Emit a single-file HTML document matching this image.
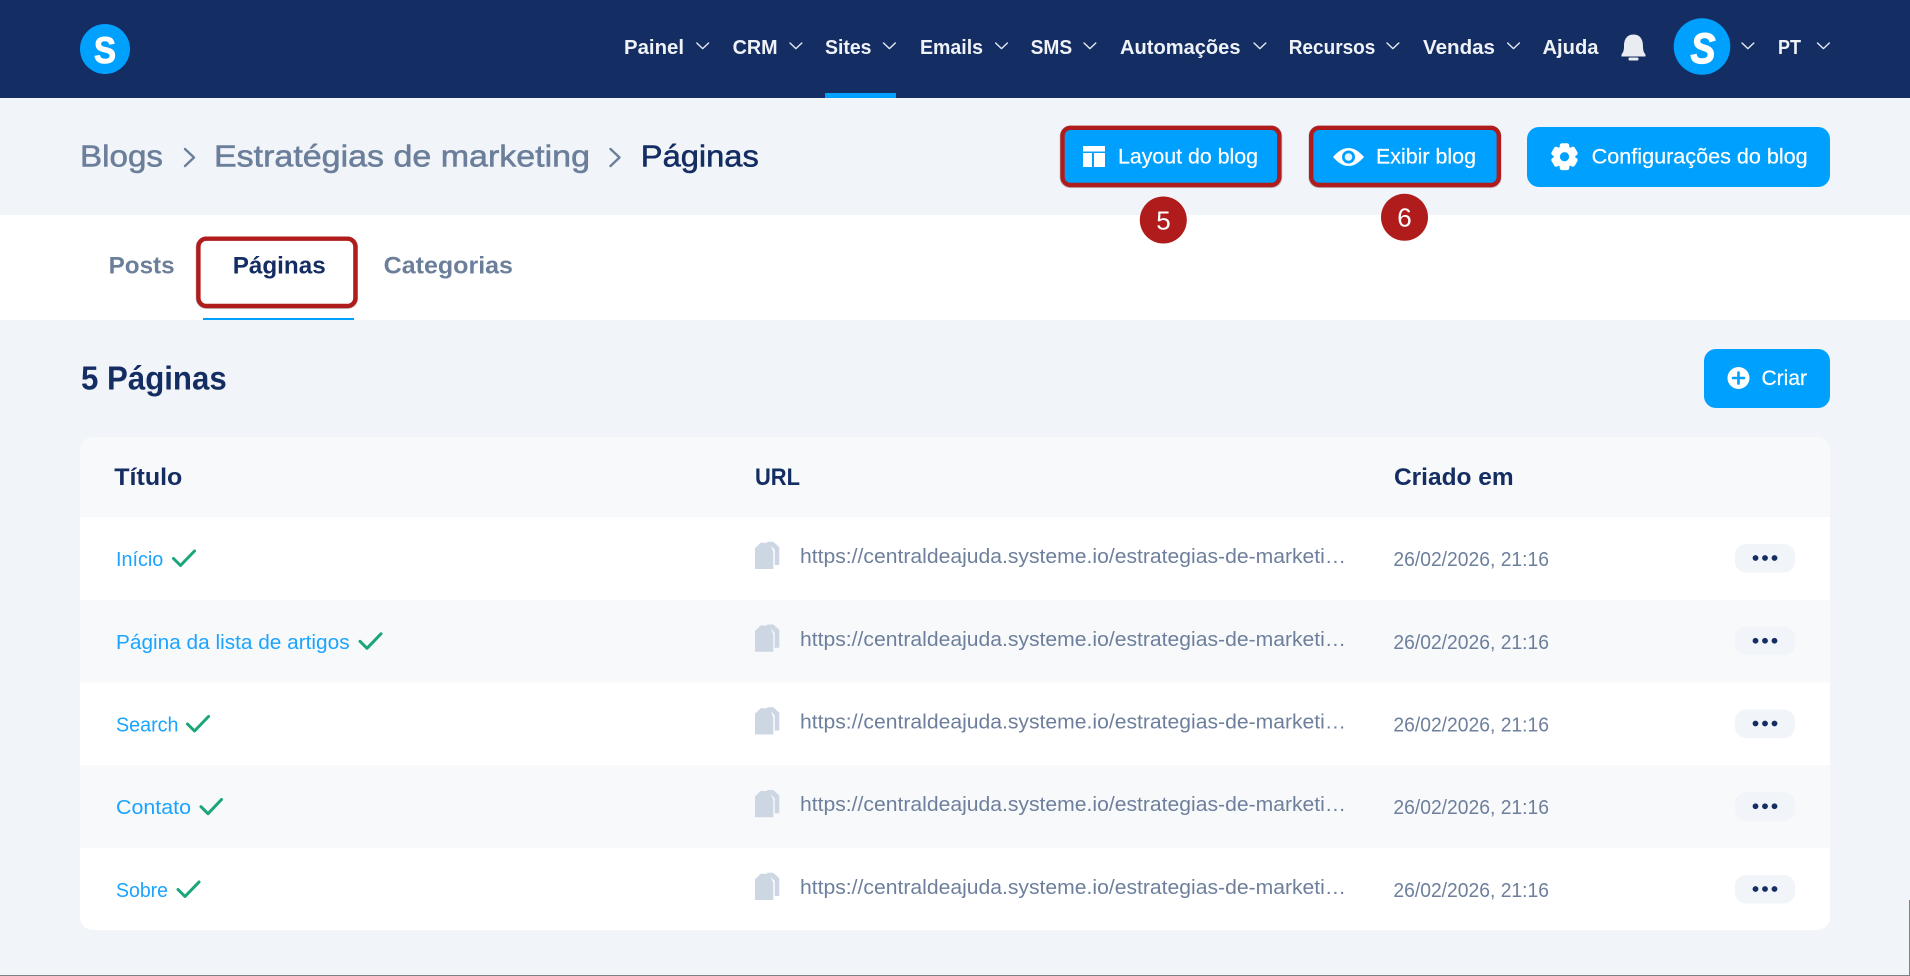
<!DOCTYPE html>
<html lang="pt">
<head>
<meta charset="utf-8">
<title>Páginas</title>
<style>
html,body{margin:0;padding:0;background:#f1f4f8;width:1910px;height:976px;overflow:hidden}
svg{display:block}
text{font-family:"Liberation Sans",sans-serif}
.n{font-size:20px;font-weight:700;fill:#eff2f6}
.b{font-size:31px;fill:#6b7f9b;stroke:#6b7f9b;stroke-width:.55px}
.t{font-size:24.5px;font-weight:700;fill:#6b7f9b}
.btn{font-size:21px;fill:#fff;stroke:#fff;stroke-width:.2px}
.h{font-size:24px;font-weight:700;fill:#142d63}
.l{font-size:20px;fill:#1aa3ff}
.u{font-size:20px;fill:#6d7f9c}
.d{font-size:20px;fill:#6d7f9c}
.chev{fill:none;stroke:#e6eaf0;stroke-width:1.4;stroke-linecap:round;stroke-linejoin:round}
.bc{fill:none;stroke:#6b7f9b;stroke-width:2.4;stroke-linecap:round;stroke-linejoin:round}
.ck{fill:none;stroke:#1aa67a;stroke-width:3;stroke-linecap:round;stroke-linejoin:round}
.rb{fill:none;stroke:#b01c1c;stroke-width:4.4}
.rs{fill:none;stroke:#8a8f98;stroke-width:1;opacity:.55}
</style>
</head>
<body>
<svg width="1910" height="976" viewBox="0 0 1910 976">
<defs>
<g id="doc" fill="#cdd6e3">
<path d="M755 548.3L760.7 542.7H769.3L773.3 551.7V569H755Z"/>
<path d="M765 541.7H773.3L779.3 547.3V565H774.7V550L766.7 541.7Z"/>
</g>
<g id="menu">
<rect x="1735" y="544" width="60" height="28.5" rx="11" fill="#f1f4f8"/>
<circle cx="1755.5" cy="558" r="2.9" fill="#142d63"/>
<circle cx="1765" cy="558" r="2.9" fill="#142d63"/>
<circle cx="1774.5" cy="558" r="2.9" fill="#142d63"/>
</g>
<path id="cv" class="chev" d="M0 0L5.9 5.6L11.8 0"/>
</defs>

<rect width="1910" height="976" fill="#f1f4f8"/>

<!-- top nav -->
<rect width="1910" height="98" fill="#142d63"/>
<ellipse cx="105" cy="49" rx="25" ry="25" fill="#00a0ff"/>
<text x="94" y="63" font-size="37" font-weight="700" fill="#fff" stroke="#fff" stroke-width="1" textLength="22" lengthAdjust="spacingAndGlyphs">S</text>

<text class="n" x="624" y="54" textLength="60" lengthAdjust="spacingAndGlyphs">Painel</text>
<use href="#cv" x="696.8" y="43"/>
<text class="n" x="732.6" y="54" textLength="45" lengthAdjust="spacingAndGlyphs">CRM</text>
<use href="#cv" x="790" y="43"/>
<text class="n" x="825" y="54" textLength="46.5" lengthAdjust="spacingAndGlyphs">Sites</text>
<use href="#cv" x="883.5" y="43"/>
<rect x="825" y="93" width="71" height="5" fill="#00a0ff"/>
<text class="n" x="920" y="54" textLength="63" lengthAdjust="spacingAndGlyphs">Emails</text>
<use href="#cv" x="995.6" y="43"/>
<text class="n" x="1030.6" y="54" textLength="41.5" lengthAdjust="spacingAndGlyphs">SMS</text>
<use href="#cv" x="1084" y="43"/>
<text class="n" x="1120" y="54" textLength="120.5" lengthAdjust="spacingAndGlyphs">Automações</text>
<use href="#cv" x="1254" y="43"/>
<text class="n" x="1288.7" y="54" textLength="86.7" lengthAdjust="spacingAndGlyphs">Recursos</text>
<use href="#cv" x="1387" y="43"/>
<text class="n" x="1423" y="54" textLength="72" lengthAdjust="spacingAndGlyphs">Vendas</text>
<use href="#cv" x="1507.6" y="43"/>
<text class="n" x="1542.5" y="54" textLength="56" lengthAdjust="spacingAndGlyphs">Ajuda</text>
<path d="M1633.5 34.5C1640.5 34.5 1643 40 1643 46C1643 50 1643.5 52 1645.5 54.5V56.5H1621.5V54.5C1623.5 52 1624 50 1624 46C1624 40 1626.5 34.5 1633.5 34.5Z" fill="#e9ecf0"/>
<rect x="1628.5" y="57.5" width="10" height="3" rx="1.4" fill="#e9ecf0"/>
<ellipse cx="1702" cy="46.5" rx="28.3" ry="28.3" fill="#00a0ff"/>
<text x="1690.5" y="63" font-size="43" font-weight="700" font-style="italic" fill="#fff" stroke="#fff" stroke-width="1.2" textLength="25" lengthAdjust="spacingAndGlyphs">S</text>
<use href="#cv" x="1742" y="43"/>
<text class="n" x="1778" y="54" textLength="23" lengthAdjust="spacingAndGlyphs">PT</text>
<use href="#cv" x="1817.5" y="43"/>

<!-- breadcrumb -->
<text class="b" x="80" y="166.7" textLength="83" lengthAdjust="spacingAndGlyphs">Blogs</text>
<path class="bc" d="M185 149L194 157.5L185 166"/>
<text class="b" x="214" y="166.7" textLength="376" lengthAdjust="spacingAndGlyphs">Estratégias de marketing</text>
<path class="bc" d="M610.5 149L619.5 157.5L610.5 166"/>
<text class="b" x="640.8" y="166.7" textLength="118" lengthAdjust="spacingAndGlyphs" style="fill:#142d63;stroke:#142d63">Páginas</text>

<!-- header buttons -->
<rect x="1063" y="128.4" width="216" height="56.4" rx="7" fill="#00a0ff"/>
<rect class="rs" x="1060.2" y="126.2" width="221.6" height="61.4" rx="10"/>
<rect class="rb" x="1062.5" y="127.8" width="216.8" height="57.2" rx="8"/>
<rect x="1083" y="146" width="22" height="5.5" fill="#fff"/>
<rect x="1083" y="153" width="9" height="14" fill="#fff"/>
<rect x="1094" y="153" width="11" height="14" fill="#fff"/>
<text class="btn" x="1118" y="163.3" textLength="140" lengthAdjust="spacingAndGlyphs">Layout do blog</text>

<rect x="1311.5" y="128.4" width="187" height="56.4" rx="7" fill="#00a0ff"/>
<rect class="rs" x="1309" y="126.2" width="192" height="61.4" rx="10"/>
<rect class="rb" x="1311.2" y="127.8" width="187.6" height="57.2" rx="8"/>
<path d="M1333 157Q1348.5 139 1364 157Q1348.5 175 1333 157Z" fill="#fff"/>
<circle cx="1348.5" cy="157" r="6.5" fill="#00a0ff"/>
<circle cx="1348.5" cy="157" r="3.8" fill="#e6f5ff"/>
<text class="btn" x="1376" y="163.3" textLength="100" lengthAdjust="spacingAndGlyphs">Exibir blog</text>

<rect x="1527" y="127" width="303" height="60" rx="12" fill="#00a0ff"/>
<g transform="translate(1564.5 156.7)" fill="#fff">
<circle r="10.8"/>
<rect x="-4.8" y="-13.4" width="9.6" height="7" rx="2.2"/>
<rect x="-4.8" y="-13.4" width="9.6" height="7" rx="2.2" transform="rotate(60)"/>
<rect x="-4.8" y="-13.4" width="9.6" height="7" rx="2.2" transform="rotate(120)"/>
<rect x="-4.8" y="-13.4" width="9.6" height="7" rx="2.2" transform="rotate(180)"/>
<rect x="-4.8" y="-13.4" width="9.6" height="7" rx="2.2" transform="rotate(240)"/>
<rect x="-4.8" y="-13.4" width="9.6" height="7" rx="2.2" transform="rotate(300)"/>
<circle r="4.6" fill="#00a0ff"/>
</g>
<text class="btn" x="1591.7" y="163.3" textLength="216" lengthAdjust="spacingAndGlyphs">Configurações do blog</text>

<!-- tabs -->
<rect x="0" y="215" width="1910" height="105" fill="#fff"/>
<text class="t" x="108.6" y="273.3" textLength="66" lengthAdjust="spacingAndGlyphs">Posts</text>
<text class="t" x="232.7" y="273.3" textLength="93" lengthAdjust="spacingAndGlyphs" style="fill:#142d63">Páginas</text>
<text class="t" x="383.7" y="273.3" textLength="129.3" lengthAdjust="spacingAndGlyphs">Categorias</text>
<rect x="203" y="318" width="151" height="2" fill="#00a0ff"/>
<rect class="rs" x="196.2" y="237" width="161.4" height="71.4" rx="10"/>
<rect class="rb" x="198.4" y="238.7" width="157" height="67.3" rx="8"/>

<!-- badges -->
<circle cx="1163.3" cy="220" r="23.5" fill="#b01c1c"/>
<text x="1163.5" y="229.3" font-size="26" fill="#fff" text-anchor="middle">5</text>
<circle cx="1404.5" cy="217.3" r="23.5" fill="#b01c1c"/>
<text x="1404.5" y="226.7" font-size="26" fill="#fff" text-anchor="middle">6</text>

<!-- section header -->
<text x="81" y="389.3" font-size="33" font-weight="700" fill="#142d63" textLength="145.7" lengthAdjust="spacingAndGlyphs">5 Páginas</text>
<rect x="1704" y="349" width="126" height="59" rx="12" fill="#00a0ff"/>
<circle cx="1738.5" cy="378" r="11" fill="#fff"/>
<path d="M1738.5 372.5V383.5M1733 378H1744" stroke="#00a0ff" stroke-width="2.6" stroke-linecap="round"/>
<text class="btn" x="1761.5" y="385" textLength="45.5" lengthAdjust="spacingAndGlyphs">Criar</text>

<!-- table -->
<rect x="80" y="437" width="1750" height="493" rx="13" fill="#fff"/>
<path d="M80 517V450A13 13 0 0 1 93 437H1817A13 13 0 0 1 1830 450V517Z" fill="#f8f9fb"/>
<rect x="80" y="600" width="1750" height="82.5" fill="#f8f9fb"/>
<rect x="80" y="765" width="1750" height="83" fill="#f8f9fb"/>

<text class="h" x="114.3" y="485" textLength="68" lengthAdjust="spacingAndGlyphs">Título</text>
<text class="h" x="755" y="485" textLength="45" lengthAdjust="spacingAndGlyphs">URL</text>
<text class="h" x="1394" y="485" textLength="119.6" lengthAdjust="spacingAndGlyphs">Criado em</text>

<!-- row 1 -->
<text class="l" x="116" y="566" textLength="47.3" lengthAdjust="spacingAndGlyphs">Início</text>
<path class="ck" d="M173.5 558.5L180.5 565.5L194.5 551"/>
<use href="#doc"/>
<text class="u" x="800" y="563" textLength="546" lengthAdjust="spacingAndGlyphs">https://centraldeajuda.systeme.io/estrategias-de-marketi…</text>
<text class="d" x="1393.4" y="566" textLength="155.6" lengthAdjust="spacingAndGlyphs">26/02/2026, 21:16</text>
<use href="#menu"/>

<!-- row 2 -->
<text class="l" x="116" y="648.8" textLength="233.6" lengthAdjust="spacingAndGlyphs">Página da lista de artigos</text>
<path class="ck" d="M360 641.3L367 648.3L381 633.8"/>
<use href="#doc" y="82.75"/>
<text class="u" x="800" y="645.8" textLength="546" lengthAdjust="spacingAndGlyphs">https://centraldeajuda.systeme.io/estrategias-de-marketi…</text>
<text class="d" x="1393.4" y="648.8" textLength="155.6" lengthAdjust="spacingAndGlyphs">26/02/2026, 21:16</text>
<use href="#menu" y="82.75"/>

<!-- row 3 -->
<text class="l" x="116" y="731.5" textLength="62.5" lengthAdjust="spacingAndGlyphs">Search</text>
<path class="ck" d="M187.5 724L194.5 731L208.5 716.5"/>
<use href="#doc" y="165.5"/>
<text class="u" x="800" y="728.5" textLength="546" lengthAdjust="spacingAndGlyphs">https://centraldeajuda.systeme.io/estrategias-de-marketi…</text>
<text class="d" x="1393.4" y="731.5" textLength="155.6" lengthAdjust="spacingAndGlyphs">26/02/2026, 21:16</text>
<use href="#menu" y="165.5"/>

<!-- row 4 -->
<text class="l" x="116" y="814.2" textLength="75" lengthAdjust="spacingAndGlyphs">Contato</text>
<path class="ck" d="M201 806.7L208 813.7L221.5 799.5"/>
<use href="#doc" y="248.25"/>
<text class="u" x="800" y="811.2" textLength="546" lengthAdjust="spacingAndGlyphs">https://centraldeajuda.systeme.io/estrategias-de-marketi…</text>
<text class="d" x="1393.4" y="814.2" textLength="155.6" lengthAdjust="spacingAndGlyphs">26/02/2026, 21:16</text>
<use href="#menu" y="248.25"/>

<!-- row 5 -->
<text class="l" x="116" y="897" textLength="52" lengthAdjust="spacingAndGlyphs">Sobre</text>
<path class="ck" d="M178 889.5L185 896.5L199 882"/>
<use href="#doc" y="331"/>
<text class="u" x="800" y="894" textLength="546" lengthAdjust="spacingAndGlyphs">https://centraldeajuda.systeme.io/estrategias-de-marketi…</text>
<text class="d" x="1393.4" y="897" textLength="155.6" lengthAdjust="spacingAndGlyphs">26/02/2026, 21:16</text>
<use href="#menu" y="331"/>

<!-- window edge -->
<rect x="0" y="975" width="1910" height="1" fill="#808080"/>
<rect x="1909" y="900" width="1" height="76" fill="#808080"/>
</svg>
</body>
</html>
